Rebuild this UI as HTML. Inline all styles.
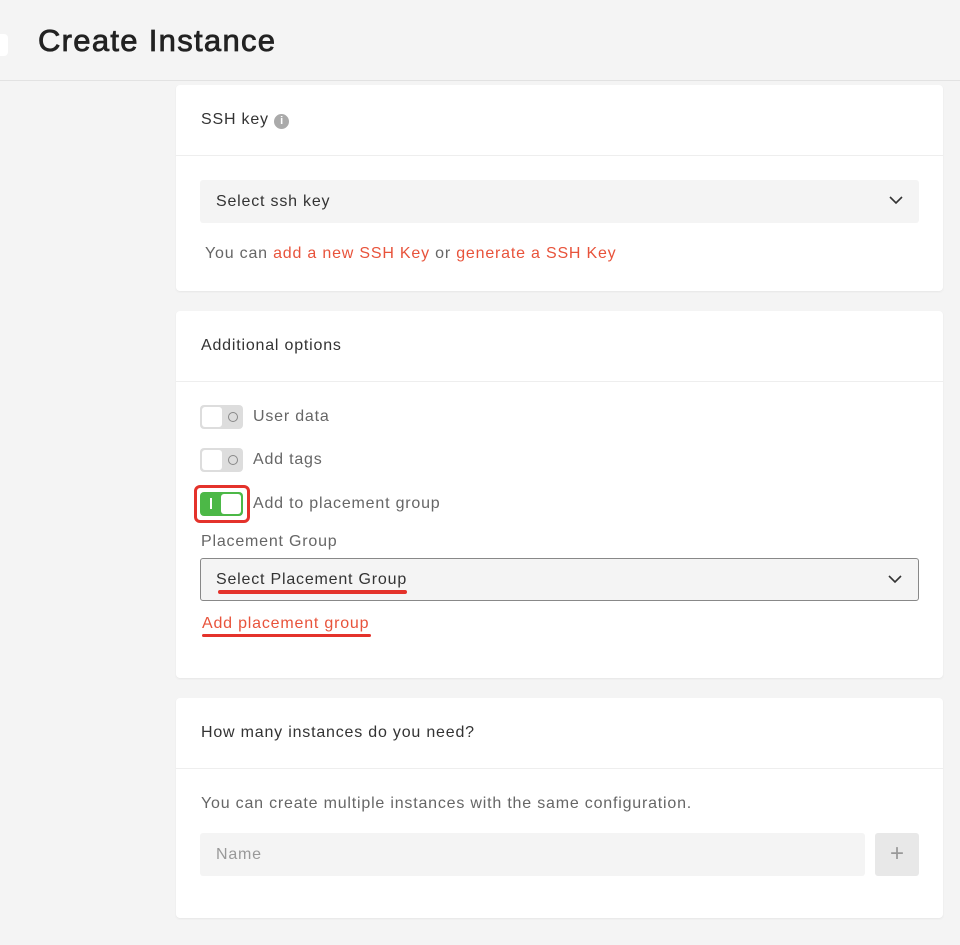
<!DOCTYPE html>
<html><head><style>
*{box-sizing:border-box;margin:0;padding:0}
body{width:960px;height:945px;background:#f4f4f4;font-family:"Liberation Sans",sans-serif;position:relative;overflow:hidden;color:#333;letter-spacing:0.8px}
.hdr{position:absolute;left:0;top:0;width:960px;height:81px;border-bottom:1px solid #e2e2e2}
.hdr h1{position:absolute;left:38px;top:23px;font-size:31px;font-weight:normal;color:#222;letter-spacing:1.3px;-webkit-text-stroke:0.8px #222}
.back{position:absolute;left:-10px;top:34px;width:18px;height:22px;background:#fff;border-radius:4px}
.card{position:absolute;left:176px;width:767px;background:#fff;border-radius:4px;box-shadow:0 1px 2px rgba(0,0,0,.06)}
.ct{height:71px;border-bottom:1px solid #eee;padding:26px 0 0 25px;font-size:16px;color:#333}
.sel{position:absolute;left:24px;width:719px;height:43px;background:#f4f4f4;border-radius:3px;font-size:16px;padding:13px 16px;color:#333}
.sel svg{position:absolute;right:16px;top:16px}
.o{color:#e8533b}
.tg{position:absolute;left:24px;width:43px;height:24px;border-radius:4px;background:#ddd}
.tg i{position:absolute;left:2px;top:2px;width:20px;height:20px;background:#fff;border-radius:3px}
.tg b{position:absolute;right:5px;top:7px;width:10px;height:10px;border:1.5px solid #888;border-radius:50%}
.lbl{position:absolute;left:77px;font-size:16px;color:#666}
</style></head><body>
<div class="hdr"><div class="back"></div><h1>Create Instance</h1></div>

<div class="card" style="top:85px;height:206px">
<div class="ct">SSH key <span style="display:inline-block;width:15px;height:15px;border-radius:50%;background:#aaa;color:#fff;font-size:11px;text-align:center;line-height:15px;font-weight:bold;vertical-align:0px;letter-spacing:0">i</span></div>
<div class="sel" style="top:95px">Select ssh key<svg width="14" height="9" viewBox="0 0 14 9"><path d="M1 1l6 6 6-6" fill="none" stroke="#333" stroke-width="1.6"/></svg></div>
<div style="position:absolute;left:29px;top:160px;font-size:16px;color:#666">You can <span class="o">add a new SSH Key</span> or <span class="o">generate a SSH Key</span></div>
</div>

<div class="card" style="top:311px;height:367px">
<div class="ct">Additional options</div>
<div class="tg" style="top:94px"><i></i><b></b></div><div class="lbl" style="top:97px">User data</div>
<div class="tg" style="top:137px"><i></i><b></b></div><div class="lbl" style="top:140px">Add tags</div>
<div style="position:absolute;left:18px;top:174px;width:56px;height:38px;border:3px solid #e4322b;border-radius:6px"></div>
<div class="tg" style="top:181px;background:#4cb847"><i style="left:21px"></i><span style="position:absolute;left:10px;top:6px;width:1.5px;height:11px;background:#fff"></span></div>
<div class="lbl" style="top:184px">Add to placement group</div>
<div style="position:absolute;left:25px;top:222px;font-size:16px;color:#666">Placement Group</div>
<div class="sel" style="top:247px;border:1px solid #888;height:43px;padding:12px 15px">Select Placement Group<svg width="14" height="9" viewBox="0 0 14 9"><path d="M1 1l6 6 6-6" fill="none" stroke="#333" stroke-width="1.6"/></svg></div>
<div style="position:absolute;left:42px;top:279px;width:189px;height:4px;background:#e4322b;border-radius:2px"></div>
<div class="o" style="position:absolute;left:26px;top:304px;font-size:16px">Add placement group</div>
<div style="position:absolute;left:26px;top:323px;width:169px;height:3px;background:#e4322b;border-radius:2px"></div>
</div>

<div class="card" style="top:698px;height:220px">
<div class="ct">How many instances do you need?</div>
<div style="position:absolute;left:25px;top:97px;font-size:16px;color:#666">You can create multiple instances with the same configuration.</div>
<div class="sel" style="top:135px;width:665px;color:#999">Name</div>
<div style="position:absolute;left:699px;top:135px;width:44px;height:43px;background:#e8e8e8;border-radius:3px;color:#999;font-size:24px;text-align:center;line-height:42px;letter-spacing:0">+</div>
</div>
</body></html>
